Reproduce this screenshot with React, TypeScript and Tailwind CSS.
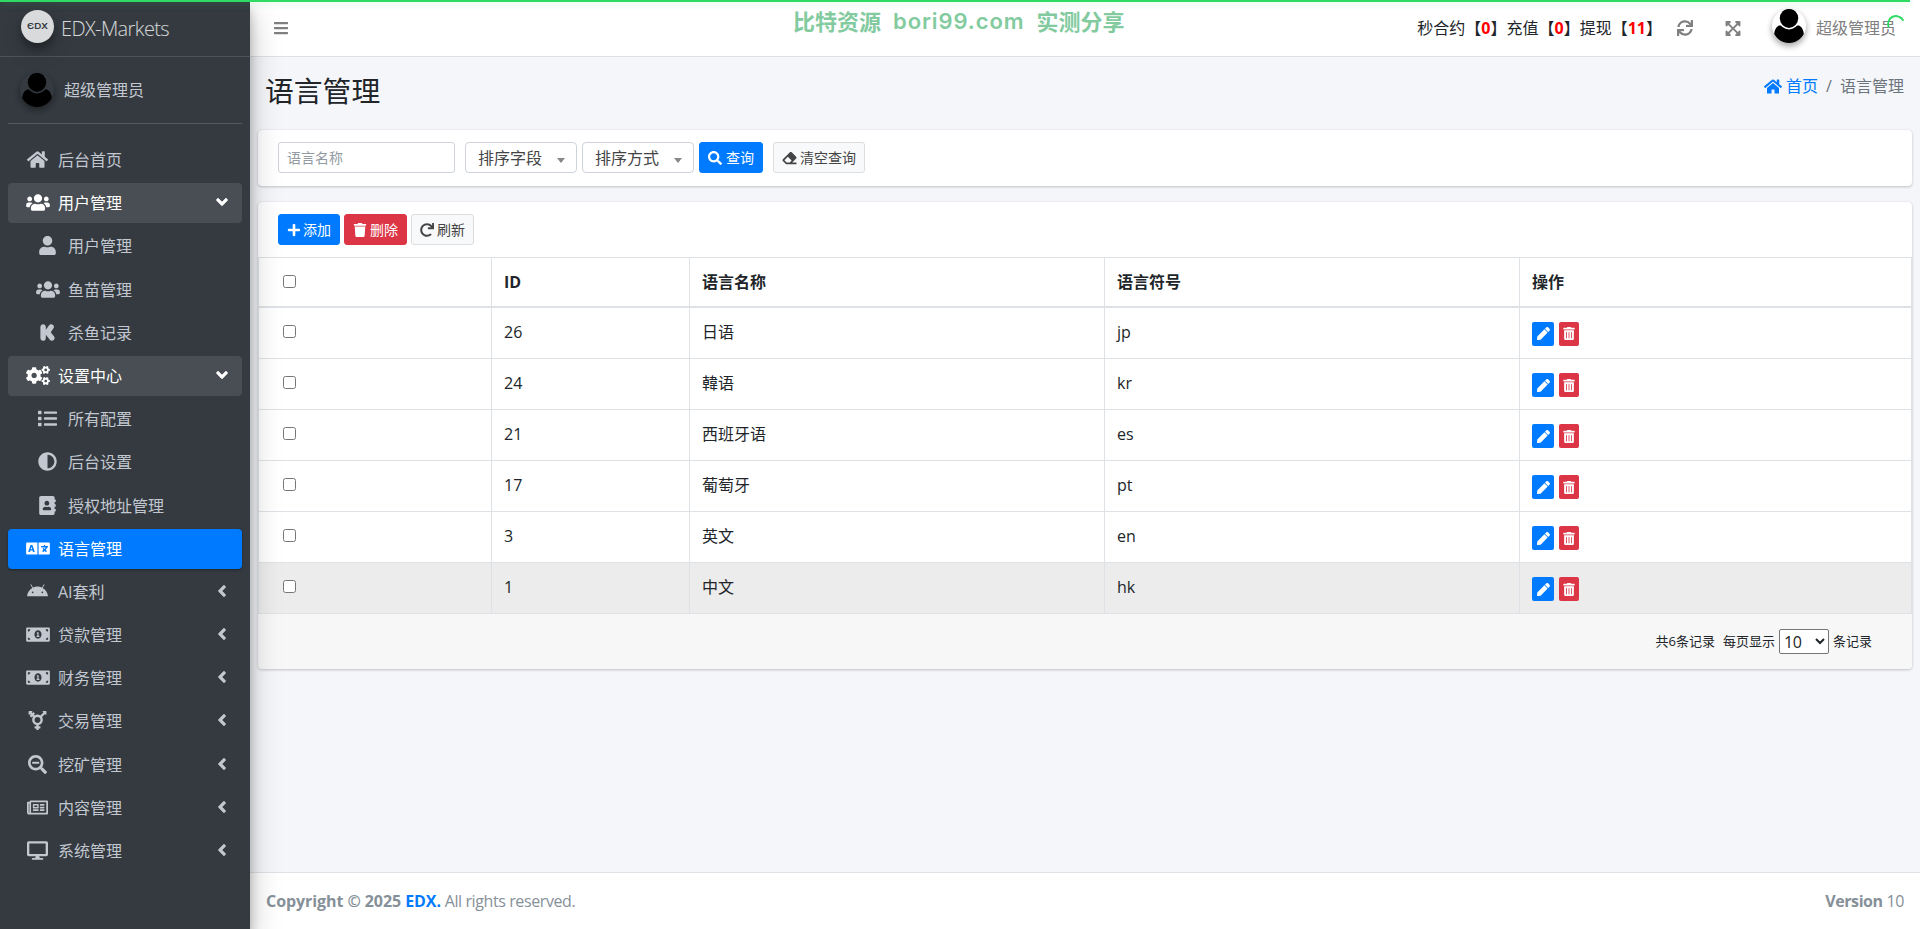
import type { ReactNode } from "react";
import type { IconType } from "react-icons";
import {
  FaAddressBook,
  FaAdjust,
  FaAndroid,
  FaAngleDown,
  FaAngleLeft,
  FaBars,
  FaCogs,
  FaDesktop,
  FaEraser,
  FaExpandArrowsAlt,
  FaHome,
  FaKickstarterK,
  FaLanguage,
  FaList,
  FaMoneyBillAlt,
  FaPen,
  FaPlus,
  FaRedo,
  FaRegNewspaper,
  FaSearch,
  FaSearchMinus,
  FaSync,
  FaTrash,
  FaTrashAlt,
  FaTransgenderAlt,
  FaUser,
  FaUsers,
} from "react-icons/fa";

type MenuItem = {
  label: string;
  icon: IconType;
  wide?: boolean;
  state?: "open" | "active";
  child?: boolean;
  arrow?: boolean;
};

const menu: MenuItem[] = [
  { label: "后台首页", icon: FaHome },
  { label: "用户管理", icon: FaUsers, wide: true, state: "open", arrow: true },
  { label: "用户管理", icon: FaUser, child: true },
  { label: "鱼苗管理", icon: FaUsers, wide: true, child: true },
  { label: "杀鱼记录", icon: FaKickstarterK, child: true },
  { label: "设置中心", icon: FaCogs, wide: true, state: "open", arrow: true },
  { label: "所有配置", icon: FaList, child: true },
  { label: "后台设置", icon: FaAdjust, child: true },
  { label: "授权地址管理", icon: FaAddressBook, child: true },
  { label: "语言管理", icon: FaLanguage, wide: true, state: "active" },
  { label: "AI套利", icon: FaAndroid, arrow: true },
  { label: "贷款管理", icon: FaMoneyBillAlt, wide: true, arrow: true },
  { label: "财务管理", icon: FaMoneyBillAlt, wide: true, arrow: true },
  { label: "交易管理", icon: FaTransgenderAlt, arrow: true },
  { label: "挖矿管理", icon: FaSearchMinus, arrow: true },
  { label: "内容管理", icon: FaRegNewspaper, arrow: true },
  { label: "系统管理", icon: FaDesktop, arrow: true },
];

const languages = [
  { id: 26, name: "日语", code: "jp" },
  { id: 24, name: "韓语", code: "kr" },
  { id: 21, name: "西班牙语", code: "es" },
  { id: 17, name: "葡萄牙", code: "pt" },
  { id: 3, name: "英文", code: "en" },
  { id: 1, name: "中文", code: "hk" },
];

function Avatar() {
  return (
    <svg
      viewBox="0 0 34 34"
      className="h-[34px] w-[34px] shrink-0 rounded-full shadow-[0_3px_6px_rgba(0,0,0,.16),0_3px_6px_rgba(0,0,0,.23)]"
    >
      <path d="M6.500 16.800C3.500 18.600 2 22.500 2.200 25.800a17 17 0 0 0 29.600 0c.2-3.300-1.300-7.200-4.300-9C25.500 16 24.500 16.800 23.500 18a10 10 0 0 1-13 0C9.500 16.800 8.500 16 6.500 16.800z" />
      <ellipse cx="17" cy="9.300" rx="9.200" ry="9.600" />
    </svg>
  );
}

function MenuLink({ item }: { item: MenuItem }) {
  const Icon = item.icon;
  const color =
    item.state === "active"
      ? "bg-[#007bff] text-white shadow-[0_1px_3px_rgba(0,0,0,.12),0_1px_2px_rgba(0,0,0,.24)]"
      : item.state === "open"
        ? "bg-white/10 text-white"
        : "text-[#c2c7d0]";

  return (
    <a
      href="#"
      className={`mb-[3.2px] flex h-10 items-center rounded ${item.child ? "pl-[26px]" : "pl-4"} pr-[13px] ${color}`}
    >
      <span className="flex w-[27px] justify-center pb-px">
        <Icon className={item.wide ? "h-[19px] w-6" : "h-[19px] w-[21px]"} />
      </span>
      <span className="ml-[7px] flex-1">{item.label}</span>
      {item.arrow &&
        (item.state === "open" ? (
          <FaAngleDown className="mb-0.5 h-[18px] w-[14px] stroke-current stroke-[16]" />
        ) : (
          <FaAngleLeft className="mb-0.5 h-[18px] w-[14px] stroke-current stroke-[16]" />
        ))}
    </a>
  );
}

function Sidebar() {
  return (
    <aside className="z-20 w-[250px] shrink-0 bg-[#343a40] shadow-[0_14px_28px_rgba(0,0,0,.25),0_10px_10px_rgba(0,0,0,.22)]">
      <div className="flex h-[57px] items-center border-b border-[#4b545c] pl-[21px]">
        <div className="-mt-1 flex h-[33px] w-[33px] items-center justify-center rounded-full bg-[#d9dadb] font-[Inter] text-[9px] font-semibold text-[#343a40] shadow-[0_10px_20px_rgba(0,0,0,.19),0_6px_6px_rgba(0,0,0,.23)]">
          <span className="scale-x-110 scale-y-90">ЄDX</span>
        </div>
        <span className="ml-[7px] mt-0.5 text-xl font-light tracking-[-0.6px] text-white/80">EDX-Markets</span>
      </div>
      <div className="mx-2 mb-4 flex h-[67px] items-center border-b border-[#4f5962] pl-3">
        <Avatar />
        <span className="ml-[10px] text-[#c2c7d0]">超级管理员</span>
      </div>
      <nav className="px-2">
        {menu.map((item, i) => (
          <MenuLink key={i} item={item} />
        ))}
      </nav>
    </aside>
  );
}

function TopBar() {
  return (
    <header className="flex h-[57px] items-center border-b border-[#dee2e6] bg-white pl-6 pr-6">
      <FaBars className="h-4 w-[14px] text-[#808080]" />
      <div className="ml-[505px] mb-[14px] flex gap-[12px] text-[22px] font-bold leading-6 text-[#83cb9f]">
        <span>比特资源</span>
        <span className="font-[Inter] font-semibold tracking-[0.9px]">bori99.com</span>
        <span>实测分享</span>
      </div>
      <div className="ml-auto flex items-center text-[#808080]">
        <span className="text-[#212529]">
          秒合约【<b className="text-[red]">0</b>】充值【<b className="text-[red]">0</b>】提现【
          <b className="text-[red]">11</b>】
        </span>
        <FaSync className="ml-[15px] h-4 w-4" />
        <FaExpandArrowsAlt className="ml-8 h-[17px] w-[16px]" />
        <span className="ml-[31px] -mt-1">
          <Avatar />
        </span>
        <span className="ml-[10px]">超级管理员</span>
      </div>
    </header>
  );
}

function Button({ tone, children }: { tone: "primary" | "danger" | "light"; children: ReactNode }) {
  const tones = {
    primary: "border-[#007bff] bg-[#007bff] text-white",
    danger: "border-[#dc3545] bg-[#dc3545] text-white",
    light: "border-[#ddd] bg-[#f8f9fa] text-[#444]",
  };
  return (
    <button className={`flex h-[31px] items-center gap-[3px] rounded-[3px] border px-2 text-sm ${tones[tone]}`}>
      {children}
    </button>
  );
}

function SortSelect({ label }: { label: string }) {
  return (
    <div className="flex h-[31px] w-28 items-center justify-between rounded border border-[#ced4da] pl-3 pr-[11px] text-[#444]">
      {label}
      <span className="mt-[5px] border-x-4 border-t-[5px] border-x-transparent border-t-[#888]" />
    </div>
  );
}

function FilterCard() {
  return (
    <section className="mx-2 flex h-[56px] items-start rounded bg-white pl-5 pt-3 shadow-[0_0_1px_rgba(0,0,0,.125),0_1px_3px_rgba(0,0,0,.2)]">
      <input
        placeholder="语言名称"
        className="h-[31px] w-[177px] rounded-[3px] border border-[#ced4da] px-2 text-sm outline-none placeholder:text-[#939ba2]"
      />
      <div className="ml-[10px] flex gap-[5px]">
        <SortSelect label="排序字段" />
        <SortSelect label="排序方式" />
        <Button tone="primary">
          <FaSearch className="mr-px" />
          查询
        </Button>
      </div>
      <div className="ml-[10px]">
        <Button tone="light">
          <FaEraser className="w-[15px]" />
          清空查询
        </Button>
      </div>
    </section>
  );
}

function LanguageTable() {
  return (
    <table className="w-full table-fixed border-collapse border border-[#dee2e6] text-left">
      <colgroup>
        <col className="w-[233px]" />
        <col className="w-[198px]" />
        <col className="w-[415px]" />
        <col className="w-[415px]" />
        <col />
      </colgroup>
      <thead>
        <tr className="h-[49px] border-b-2 border-[#dee2e6]">
          <th className="border-r border-[#dee2e6] pl-6">
            <input type="checkbox" className="mb-px block h-[13px] w-[13px]" />
          </th>
          <th className="border-r border-[#dee2e6] px-3">ID</th>
          <th className="border-r border-[#dee2e6] px-3">语言名称</th>
          <th className="border-r border-[#dee2e6] px-3">语言符号</th>
          <th className="px-3">操作</th>
        </tr>
      </thead>
      <tbody>
        {languages.map((lang) => (
          <tr key={lang.id} className="h-[51px] border-b border-[#dee2e6] first:h-[52px] last:bg-[#ececec]">
            <td className="border-r border-[#dee2e6] pl-6">
              <input type="checkbox" className="mb-[3px] block h-[13px] w-[13px]" />
            </td>
            <td className="border-r border-[#dee2e6] px-3 pb-0.5">{lang.id}</td>
            <td className="border-r border-[#dee2e6] px-3 pb-0.5">{lang.name}</td>
            <td className="border-r border-[#dee2e6] px-3 pb-0.5">{lang.code}</td>
            <td className="px-3">
              <div className="mt-[2px] flex gap-[5px] text-white">
                <button className="flex h-6 w-[22px] items-center justify-center rounded-[2px] bg-[#007bff]">
                  <FaPen className="h-[13px] w-[13px]" />
                </button>
                <button className="flex h-6 w-5 items-center justify-center rounded-[2px] bg-[#dc3545]">
                  <FaTrashAlt className="h-[13px] w-3" />
                </button>
              </div>
            </td>
          </tr>
        ))}
      </tbody>
    </table>
  );
}

function TableCard() {
  return (
    <section className="mx-2 mt-4 overflow-hidden rounded bg-white shadow-[0_0_1px_rgba(0,0,0,.125),0_1px_3px_rgba(0,0,0,.2)]">
      <div className="flex h-[55px] items-center gap-1 pl-5">
        <Button tone="primary">
          <FaPlus className="-mr-px" />
          添加
        </Button>
        <Button tone="danger">
          <FaTrash />
          删除
        </Button>
        <Button tone="light">
          <FaRedo />
          刷新
        </Button>
      </div>
      <LanguageTable />
      <div className="flex h-[55px] items-center justify-end bg-[#f7f7f7] pr-10 text-[13px]">
        <span className="mr-2">共6条记录</span>
        <span>每页显示</span>
        <select className="mx-1 h-[25px] w-[50px] rounded-[2px] border border-[#767676] bg-white text-base leading-5 tracking-[-0.4px]">
          <option>10</option>
        </select>
        <span>条记录</span>
      </div>
    </section>
  );
}

export default function App() {
  return (
    <div className="relative flex h-[929px] w-full overflow-hidden bg-[#f4f6f9] font-['Open_Sans','Noto_Sans_CJK_SC',sans-serif] text-base text-[#212529]">
      <Sidebar />
      <div className="flex min-w-0 flex-1 flex-col">
        <TopBar />
        <main className="flex-1">
          <div className="flex h-[73px] justify-between px-4">
            <h1 className="-ml-px mt-[17px] text-[28.8px] leading-[34px]">语言管理</h1>
            <div className="mt-[17px] flex h-6 items-center text-[#6c757d]">
              <a href="#" className="flex items-center gap-1 text-[#007bff]">
                <FaHome className="h-[17px] w-[18px]" />
                首页
              </a>
              <span className="px-2">/</span>
              <span>语言管理</span>
            </div>
          </div>
          <FilterCard />
          <TableCard />
        </main>
        <footer className="flex h-[57px] items-center justify-between border-t border-[#dee2e6] bg-white px-4 tracking-[-0.4px] text-[#869099]">
          <span>
            <b className="tracking-[-0.07px]">
              Copyright © 2025 <a href="#" className="text-[#007bff]">EDX.</a>
            </b>{" "}
            All rights reserved.
          </span>
          <span>
            <b>Version</b> 10
          </span>
        </footer>
      </div>

      {/* page loading bar and spinner */}
      <div className="absolute left-0 top-0 z-30 h-[2px] w-[1910px] bg-[#2fdb63] shadow-[0_0_8px_rgba(47,219,99,.4)]" />
      <div className="absolute right-[15px] top-[15px] z-30 h-[18px] w-[18px] rotate-[20deg] rounded-full border-2 border-transparent border-l-[#2fdb63] border-t-[#2fdb63]" />
    </div>
  );
}
